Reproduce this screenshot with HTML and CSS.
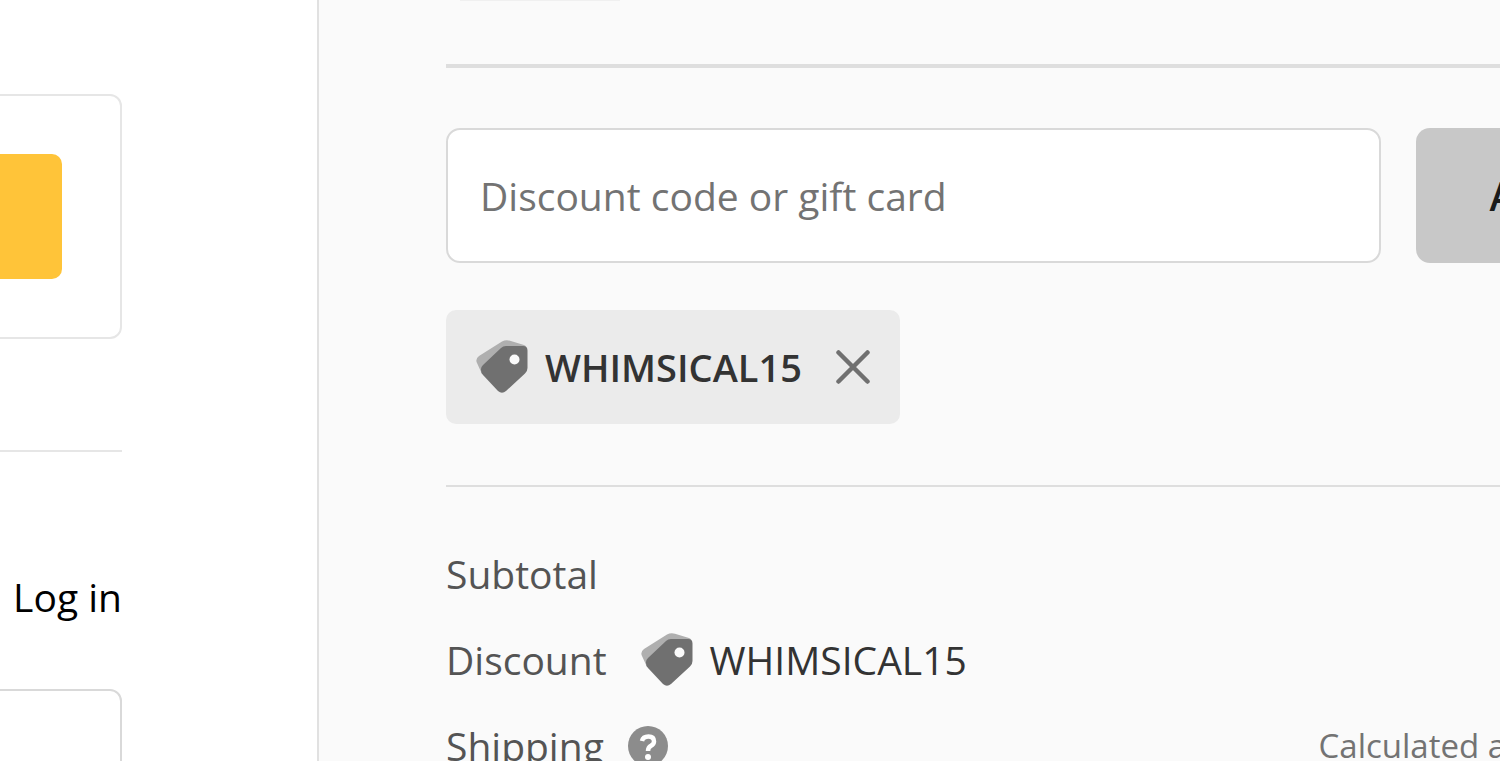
FILE: index.html
```
<!DOCTYPE html>
<html lang="en">
<head>
	<title>Checkout</title>
	<meta charset="utf-8">
	<link rel="stylesheet" href="styles.css">
</head>
<body>

	<svg class="defs" width="0" height="0" aria-hidden="true">
		<symbol id="tag" viewBox="0 0 52 54">
			<path fill="#afafaf" d="M1 23 Q-1 19 3 16 L26 1.500 Q30 -.5 34 .8 L48 5 Q51 6 51 10 L6 34 Z"/>
			<path fill="#707070" d="M30 6 H47 Q51.500 6 51.500 10.500 V28 Q51.500 31 49 33.500 L30 51 Q26 54.500 22 51 L7 35 Q5 33 5 30 V29 Q5 27 7 25 L25 8 Q27 6 30 6 Z"/>
			<circle cx="38.500" cy="19.500" r="5" fill="#fafafa"/>
		</symbol>
	</svg>

	<div class="checkout">

		<main class="main">
			<div class="express">
				<button class="pay" type="button" aria-label="Express checkout"></button>
			</div>
			<hr class="rule rule-main">
			<p class="login"><a href="#">Log in</a></p>
			<input class="email" type="email" aria-label="Email">
		</main>

		<aside class="sidebar">
			<div class="thumb"></div>
			<hr class="rule rule-thick">

			<form class="discount">
				<input class="field" type="text" placeholder="Discount code or gift card" aria-label="Discount code or gift card">
				<button class="apply" type="button">Apply</button>
			</form>

			<div class="chip">
				<svg class="tag" aria-hidden="true"><use href="#tag"/></svg>
				<span class="code">WHIMSICAL15</span>
				<button class="remove" type="button" aria-label="Remove WHIMSICAL15">
					<svg width="34" height="34" viewBox="0 0 34 34" aria-hidden="true">
						<path d="M2.500 2.500 L31.500 31.500 M31.500 2.500 L2.500 31.500" fill="none" stroke="#707070" stroke-width="4.500" stroke-linecap="round"/>
					</svg>
				</button>
			</div>

			<hr class="rule">

			<table class="totals">
				<tr>
					<th scope="row">Subtotal</th>
					<td></td>
				</tr>
				<tr>
					<th scope="row">
						<div class="label wide">
							Discount
							<span class="reduction">
								<svg class="tag" aria-hidden="true"><use href="#tag"/></svg>
								WHIMSICAL15
							</span>
						</div>
					</th>
					<td></td>
				</tr>
				<tr>
					<th scope="row">
						<div class="label">
							Shipping
							<svg width="40" height="40" viewBox="0 0 40 40" aria-hidden="true">
								<circle cx="20" cy="20" r="20" fill="#8c8c8c"/>
								<path d="M14 15 Q15 10.500 20.500 10.500 Q26 10.500 26 15.500 Q26 18 23 19.800 Q20 21.500 20 25" fill="none" stroke="#fff" stroke-width="4.500"/>
								<circle cx="20" cy="31" r="3" fill="#fff"/>
							</svg>
						</div>
					</th>
					<td class="small">Calculated at next step</td>
				</tr>
			</table>
		</aside>

	</div>

</body>
</html>
```
FILE: styles.css
```
* {
	box-sizing: border-box;
}

body {
	margin: 0;
	font-family: "Segoe UI", "Open Sans", "Noto Sans", sans-serif;
	font-size: 39px;
	line-height: 60px;
	color: #000;
	background: #fff;
}

input,
button {
	margin: 0;
	font: inherit;
}

.defs {
	display: block;
}

.checkout {
	display: flex;
	height: 100vh;
	overflow: hidden;
}

.main {
	flex: none;
	width: 21%;
	margin-right: 2px;
	padding: 94px 193px 0 0;
}

.express {
	margin-left: -120px;
	padding: 58px;
	border: 2px solid #e6e6e6;
	border-radius: 12px;
}

.pay {
	display: block;
	width: 100%;
	height: 125px;
	border: 0;
	border-radius: 10px;
	background: #ffc439;
}

.rule {
	height: 2px;
	margin: 0;
	border: 0;
	background: #dedede;
}

.rule-main {
	margin-top: 111px;
	background: #e6e6e6;
}

.login {
	margin: 115px 0 62px;
	text-align: right;
	white-space: nowrap;
}

.login a {
	color: #000;
	text-decoration: none;
}

.email {
	display: block;
	width: 200px;
	height: 135px;
	margin-left: -78px;
	border: 2px solid #d9d9d9;
	border-radius: 12px;
	background: #fff;
}

/* the summary runs on past the right edge of the window */
.sidebar {
	flex: 1;
	margin-right: -169px;
	padding-left: 127px;
	border-left: 2px solid #e1e1e1;
	background: #fafafa;
}

.thumb {
	width: 160px;
	height: 1px;
	margin: 0 0 63px 14px;
	background: #f0f0f0;
}

.rule-thick {
	height: 4px;
}

.discount {
	display: flex;
	gap: 35px;
	margin: 60px 0 47px;
}

.field {
	flex: 1;
	min-width: 0;
	height: 135px;
	padding: 0 32px;
	border: 2px solid #d9d9d9;
	border-radius: 14px;
	background: #fff;
}

.field::placeholder {
	color: #737373;
	opacity: 1;
}

.apply {
	width: 253px;
	border: 0;
	border-radius: 14px;
	color: #1a1a1a;
	background: #c8c8c8;
	font-weight: 600;
}

.chip {
	display: inline-flex;
	align-items: center;
	height: 114px;
	margin-bottom: 61px;
	padding: 0 30px;
	border-radius: 10px;
	color: #333;
	background: #ebebeb;
	font-size: 38px;
	font-weight: 600;
	vertical-align: top;
}

.tag {
	flex: none;
	width: 52px;
	height: 54px;
}

.code {
	margin: 0 34px 0 17px;
}

.remove {
	display: flex;
	padding: 0;
	border: 0;
	background: none;
}

.totals {
	width: 100%;
	margin-top: 44px;
	border-collapse: collapse;
}

.totals th,
.totals td {
	height: 86px;
	padding: 0;
	color: #545454;
	font-weight: 400;
	text-align: left;
	white-space: nowrap;
}

.label {
	display: flex;
	align-items: center;
	gap: 24px;
}

.wide {
	gap: 34px;
}

.reduction {
	display: flex;
	align-items: center;
	gap: 17px;
	color: #333;
}

.totals .small {
	color: #737373;
	font-size: 33px;
	text-align: right;
}
```
